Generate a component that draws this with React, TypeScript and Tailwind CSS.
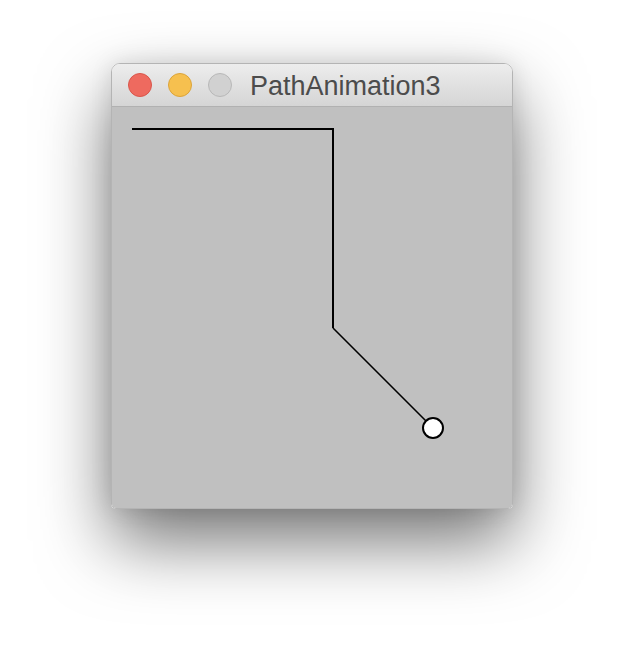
export default function App() {
  return (
    <div className="w-[624px] h-[668px] bg-white flex justify-center pt-[63px]">
      <div className="w-[402px] h-[446px] flex flex-col rounded-t-[9px] rounded-b-[5px] border border-[#b4b4b4] overflow-hidden shadow-[0_32px_70px_rgba(0,0,0,0.55),0_0_22px_rgba(0,0,0,0.1)]">
        <div className="h-[43px] shrink-0 flex items-center px-[16px] bg-gradient-to-b from-[#ededed] to-[#d5d5d5] border-b border-[#b1b1b1]">
          <div className="flex items-center gap-[16px]">
            <span className="w-[24px] h-[24px] rounded-full bg-[#ee6a5f] border border-[#d9564b]" />
            <span className="w-[24px] h-[24px] rounded-full bg-[#f6c04f] border border-[#dca43a]" />
            <span className="w-[24px] h-[24px] rounded-full bg-[#d1d1d1] border border-[#b8b8b8]" />
          </div>
          <span
            className="ml-[18px] mt-[2px] text-[27px] leading-none text-[#4c4c4c]"
            style={{ fontFamily: '"Helvetica Neue", "Liberation Sans", Arial, sans-serif' }}
          >
            PathAnimation3
          </span>
        </div>
        <div className="flex-1 bg-[#c0c0c0]">
          <svg width="400" height="401" viewBox="0 0 400 401">
            <polyline
              points="20,22 221,22 221,221"
              fill="none"
              stroke="#000"
              strokeWidth="2"
              shapeRendering="crispEdges"
            />
            <line x1="221" y1="221" x2="314" y2="314" stroke="#000" strokeWidth="1.6" />
            <circle cx="321" cy="321" r="10" fill="#fff" stroke="#000" strokeWidth="2" />
          </svg>
        </div>
      </div>
    </div>
  );
}
